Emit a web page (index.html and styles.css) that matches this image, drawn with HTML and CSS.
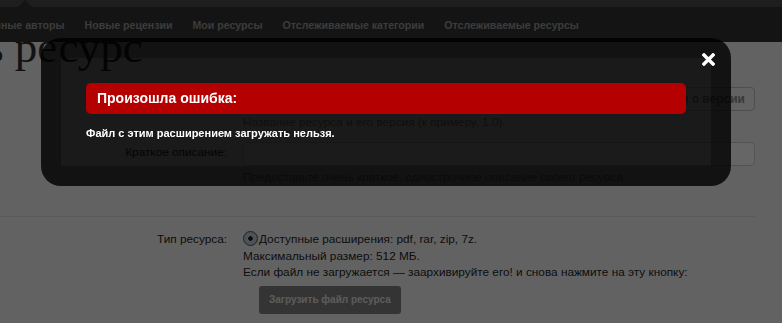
FILE: index.html
```html
<!DOCTYPE html>
<html lang="ru">
<head>
    <meta charset="UTF-8">
    <meta name="viewport" content="width=device-width, initial-scale=1.0">
    <title>Добавить ресурс</title>
    <link rel="stylesheet" href="styles.css">
</head>
<body>
    <div class="top-strip"><span class="tab-arrow"></span></div>
    <nav class="tabs">
        <a href="#" class="tab tab-first">Избранные авторы</a>
        <a href="#" class="tab">Новые рецензии</a>
        <a href="#" class="tab">Мои ресурсы</a>
        <a href="#" class="tab">Отслеживаемые категории</a>
        <a href="#" class="tab">Отслеживаемые ресурсы</a>
    </nav>

    <h1 class="page-title">Добавить ресурс</h1>

    <form class="resource-form">
        <div class="row">
            <label class="row-label" for="title">Название:</label>
            <div class="row-ctrl">
                <div class="field-line">
                    <input type="text" id="title" class="text-input">
                    <button type="button" class="small-button">Информация о версии</button>
                </div>
                <p class="explain">Название ресурса и его версия (к примеру, 1.0).</p>
            </div>
        </div>
        <div class="row row-next">
            <label class="row-label" for="tagline">Краткое описание:</label>
            <div class="row-ctrl">
                <input type="text" id="tagline" class="text-input">
                <p class="explain">Предоставьте очень краткое, однострочное описание своего ресурса.</p>
            </div>
        </div>
        <div class="row section">
            <span class="row-label">Тип ресурса:</span>
            <div class="row-ctrl type-text">
                <span class="radio"></span>Доступные расширения: pdf, rar, zip, 7z.<br>
                Максимальный размер: 512 МБ.<br>
                Если файл не загружается — заархивируйте его! и снова нажмите на эту кнопку:
                <div><button type="button" class="upload-button">Загрузить файл ресурса</button></div>
            </div>
        </div>
    </form>

    <div class="mask"></div>
    <div class="error-overlay">
        <a href="#" class="close" title="Закрыть">
            <svg width="13" height="13" viewBox="0 0 13 13">
                <path d="M2 2 L11 11 M11 2 L2 11" stroke="#fff" stroke-width="3.4" stroke-linecap="square" fill="none"/>
            </svg>
        </a>
        <h2 class="error-heading">Произошла ошибка:</h2>
        <p class="error-text">Файл с этим расширением загружать нельзя.</p>
    </div>
</body>
</html>
```

FILE: styles.css
```css
body {
    margin: 0;
    background: #f5f5f5;
    font-family: 'Liberation Sans', Arial, sans-serif;
    font-size: 11.8px;
    color: #262626;
    height: 323px;
    overflow: hidden;
}

.top-strip {
    height: 7px;
    background: #4b4b4b;
    position: relative;
}

.tab-arrow {
    position: absolute;
    left: 18px;
    bottom: 0;
    border-left: 7px solid transparent;
    border-right: 7px solid transparent;
    border-bottom: 7px solid #323232;
}

.tabs {
    height: 35px;
    background: #323232;
    display: flex;
    align-items: center;
    white-space: nowrap;
}

.tab {
    padding: 0 10px;
    font-size: 10.6px;
    font-weight: bold;
    color: #969696;
    text-decoration: none;
}

.tab-first {
    margin-left: -47px;
}

.page-title {
    margin: -17px 0 0 -178px;
    font-family: 'Liberation Serif', 'Times New Roman', serif;
    font-size: 45px;
    line-height: 44px;
    font-weight: normal;
    color: #2e2e2e;
    white-space: nowrap;
}

.resource-form {
    padding: 18px 27px 0 0;
}

.row {
    display: grid;
    grid-template-columns: 227px 1fr;
    column-gap: 16px;
}

.row-next {
    margin-top: 11px;
}

.row-label {
    text-align: right;
    line-height: 17px;
    padding-top: 2px;
}

.field-line {
    display: flex;
    gap: 4px;
}

.text-input {
    box-sizing: border-box;
    width: 100%;
    height: 24px;
    margin: 0;
    border: 1px solid #d0d0d0;
    border-radius: 4px;
    background: #fff;
}

.small-button {
    height: 24px;
    padding: 0 9px;
    border: 1px solid #c4c4c4;
    border-radius: 4px;
    background: #f5f5f5;
    font-family: inherit;
    font-size: 12px;
    font-weight: bold;
    color: #8e8e8e;
    white-space: nowrap;
}

.explain {
    margin: 3px 0 0;
    line-height: 17px;
    color: #8a8a8a;
}

.section {
    margin-top: 30px;
    border-top: 1px solid #e2e2e2;
    padding-top: 14px;
}

.section .row-label {
    padding-top: 0;
    line-height: 16.5px;
}

.type-text {
    line-height: 16.5px;
}

.radio {
    display: inline-block;
    box-sizing: border-box;
    width: 15px;
    height: 15px;
    margin-right: 1px;
    vertical-align: -3px;
    border: 1px solid #555;
    border-radius: 50%;
    background: radial-gradient(circle, #202020 0 2px, #c9d6e4 2.5px, #aebfd2 100%);
}

.upload-button {
    margin: 5px 0 0 16px;
    height: 28px;
    padding: 0 10px;
    border: none;
    border-radius: 3px;
    background: #828282;
    font-family: inherit;
    font-size: 10px;
    font-weight: bold;
    color: #e6e6e6;
}

.mask {
    position: fixed;
    inset: 0;
    background: rgba(0, 0, 0, 0.6);
}

.error-overlay {
    position: absolute;
    left: 41px;
    top: 38px;
    width: 600px;
    padding: 25px;
    border: 20px solid rgba(0, 0, 0, 0.3);
    border-radius: 20px;
    background: rgba(0, 0, 0, 0.73);
    color: #fff;
}

.close {
    position: absolute;
    top: -5px;
    right: -4px;
    display: block;
    width: 13px;
    height: 13px;
}

.close svg {
    display: block;
}

.error-heading {
    margin: 0;
    height: 31px;
    box-sizing: border-box;
    padding: 0 11px;
    background: #b40000;
    border-radius: 5px;
    font-size: 14px;
    line-height: 31px;
}

.error-text {
    margin: 12px 0 0;
    font-size: 11px;
    line-height: 15px;
    font-weight: bold;
}
```
